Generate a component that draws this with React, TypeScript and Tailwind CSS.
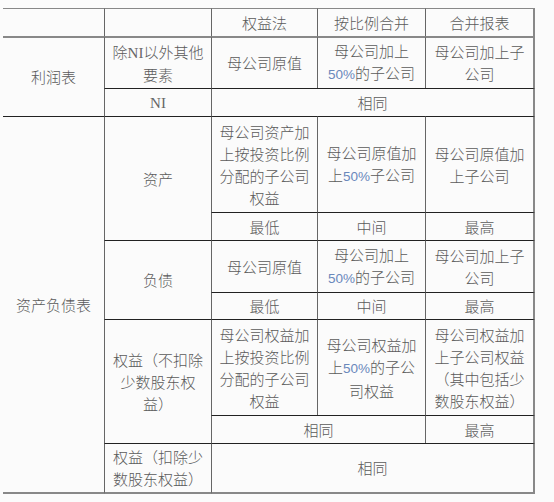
import React from "react";

const FONT = { fontFamily: '"Noto Sans CJK SC", "Noto Sans", sans-serif' };

function P() {
  return <span className="text-[#6a88bb] text-[13.5px] font-normal" style={{ fontFamily: '"Liberation Sans", "Noto Sans CJK SC", sans-serif' }}>50%</span>;
}
function NI() {
  return <span className="font-normal text-[#666]" style={{ fontFamily: '"Liberation Serif", "Noto Sans CJK SC", serif' }}>NI</span>;
}

type CellProps = {
  className?: string;
  children?: React.ReactNode;
};
function C({ className = "", children }: CellProps) {
  return (
    <div className={`flex items-center justify-center text-center border-t border-t-[#222] border-l border-l-[#666] leading-[22px] ${className}`}>
      <div>{children}</div>
    </div>
  );
}

export default function App() {
  return (
    <div className="w-[554px] h-[502px] bg-[#fbfbfb] pt-[8px] pl-[3px]" style={FONT}>
      <div className="grid grid-cols-[101px_107px_106px_108px_110px] grid-rows-[28px_52px_28px_96px_28px_52px_27px_96px_28px_51px] text-[15px] font-light text-[#5a5a5a] w-[532px]">
        {/* header */}
        <C className="col-start-1 row-start-1 border-l-0 border-t-[#888]" />
        <C className="col-start-2 row-start-1 border-t-[#888] border-l-[#333]" />
        <C className="col-start-3 row-start-1 border-t-[#888]">权益法</C>
        <C className="col-start-4 row-start-1 border-t-[#888]">按比例合并</C>
        <C className="col-start-5 row-start-1 border-t-[#888] border-r-2 border-r-[#888]">合并报表</C>

        {/* 利润表 */}
        <C className="col-start-1 row-start-2 row-span-2 border-l-0 border-t-2 border-t-[#888]">利润表</C>
        <C className="col-start-2 row-start-2 border-t-2 border-t-[#888] border-l-[#333]">除<NI />以外其他<br />要素</C>
        <C className="col-start-3 row-start-2 border-t-2 border-t-[#888]">母公司原值</C>
        <C className="col-start-4 row-start-2 border-t-2 border-t-[#888]">母公司加上<br /><P />的子公司</C>
        <C className="col-start-5 row-start-2 border-t-2 border-t-[#888] border-r-2 border-r-[#888]">母公司加上子<br />公司</C>

        <C className="col-start-2 row-start-3 border-l-[#333]"><NI /></C>
        <C className="col-start-3 row-start-3 col-span-3 border-r-2 border-r-[#888]">相同</C>

        {/* 资产负债表 */}
        <C className="col-start-1 row-start-4 row-span-7 border-l-0 border-b-2 border-b-[#888]">资产负债表</C>

        <C className="col-start-2 row-start-4 row-span-2 border-l-[#333]">资产</C>
        <C className="col-start-3 row-start-4">母公司资产加<br />上按投资比例<br />分配的子公司<br />权益</C>
        <C className="col-start-4 row-start-4">母公司原值加<br />上<P />子公司</C>
        <C className="col-start-5 row-start-4 border-r-2 border-r-[#888]">母公司原值加<br />上子公司</C>

        <C className="col-start-3 row-start-5">最低</C>
        <C className="col-start-4 row-start-5">中间</C>
        <C className="col-start-5 row-start-5 border-r-2 border-r-[#888]">最高</C>

        <C className="col-start-2 row-start-6 row-span-2 border-l-[#333]">负债</C>
        <C className="col-start-3 row-start-6">母公司原值</C>
        <C className="col-start-4 row-start-6">母公司加上<br /><P />的子公司</C>
        <C className="col-start-5 row-start-6 border-r-2 border-r-[#888]">母公司加上子<br />公司</C>

        <C className="col-start-3 row-start-7">最低</C>
        <C className="col-start-4 row-start-7">中间</C>
        <C className="col-start-5 row-start-7 border-r-2 border-r-[#888]">最高</C>

        <C className="col-start-2 row-start-8 row-span-2 border-l-[#333]">权益（不扣除<br />少数股东权<br />益）</C>
        <C className="col-start-3 row-start-8">母公司权益加<br />上按投资比例<br />分配的子公司<br />权益</C>
        <C className="col-start-4 row-start-8">母公司权益加<br />上<P />的子公<br />司权益</C>
        <C className="col-start-5 row-start-8 border-r-2 border-r-[#888]">母公司权益加<br />上子公司权益<br />（其中包括少<br />数股东权益）</C>

        <C className="col-start-3 row-start-9 col-span-2">相同</C>
        <C className="col-start-5 row-start-9 border-r-2 border-r-[#888]">最高</C>

        <C className="col-start-2 row-start-10 border-l-[#333] border-b-2 border-b-[#888]">权益（扣除少<br />数股东权益）</C>
        <C className="col-start-3 row-start-10 col-span-3 border-r-2 border-r-[#888] border-b-2 border-b-[#888]">相同</C>
      </div>
    </div>
  );
}
